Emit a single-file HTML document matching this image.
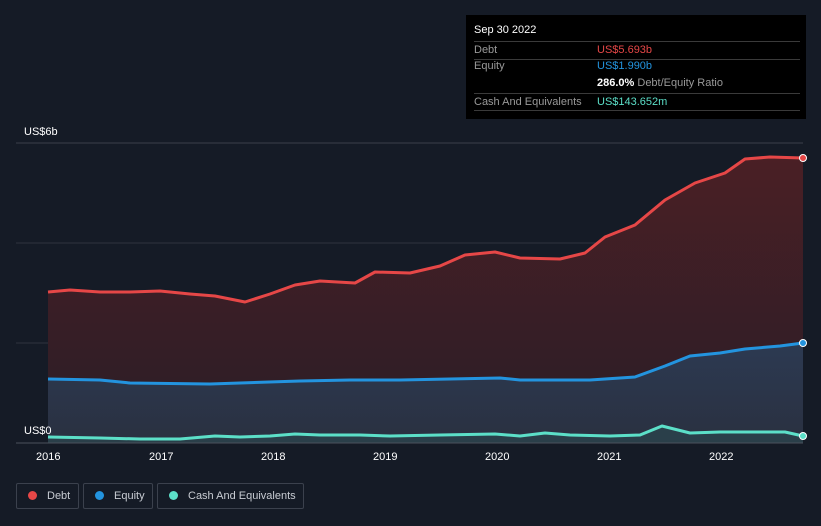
<!DOCTYPE html><html><head><style>
body{margin:0;width:821px;height:526px;background:#151b26;font-family:"Liberation Sans",sans-serif;overflow:hidden;position:relative}
.t{position:absolute;font-size:11px;white-space:nowrap}
.tip{position:absolute;left:466px;top:15px;width:340px;height:104px;background:#000}
.row{position:absolute;left:8px;width:326px;border-top:1px solid #3a3a3a;height:17px}
.leg{position:absolute;top:483px;height:26px;border:1px solid #3b414d;border-radius:2px;color:#c8ccd3;font-size:11px;line-height:25px;box-sizing:border-box;white-space:nowrap}
.leg i{display:inline-block;width:9px;height:9px;border-radius:50%;margin:0 10px 0 11px;vertical-align:-1px}
</style></head><body>
<svg width="821" height="526" style="position:absolute;left:0;top:0">
<defs><linearGradient id="d" x1="0" y1="0" x2="0" y2="1"><stop offset="0" stop-color="#4a1f25"/><stop offset="1" stop-color="#2a1e26"/></linearGradient>
<linearGradient id="e" x1="0" y1="0" x2="0" y2="1"><stop offset="0" stop-color="#2c3a52"/><stop offset="1" stop-color="#2a3040"/></linearGradient></defs>
<line x1="16" y1="143" x2="803" y2="143" stroke="#3a3f4a"/>
<line x1="16" y1="243" x2="803" y2="243" stroke="#2e333e"/>
<line x1="16" y1="343" x2="803" y2="343" stroke="#2e333e"/>
<path d="M48,292 L70,290 L100,292 L130,292 L160,291 L190,294 L215,296 L245,302 L270,294 L295,285 L320,281 L355,283 L375,272 L410,273 L440,266 L465,255 L495,252 L520,258 L560,259 L585,253 L605,237 L635,225 L665,200 L695,183 L725,173 L745,159 L770,157 L803,158 L803,443 L48,443Z" fill="url(#d)"/>
<path d="M48,379 L100,380 L130,383 L210,384 L240,383 L300,381 L350,380 L400,380 L500,378 L520,380 L590,380 L635,377 L665,366 L690,356 L720,353 L745,349 L780,346 L803,343 L803,443 L48,443Z" fill="url(#e)"/>
<path d="M48,437 L100,438 L140,439 L180,439 L215,436 L240,437 L270,436 L295,434 L320,435 L360,435 L390,436 L440,435 L495,434 L520,436 L545,433 L570,435 L610,436 L640,435 L662,426 L690,433 L720,432 L760,432 L785,432 L803,436 L803,443 L48,443Z" fill="#2c4a50" opacity=".6"/>
<path d="M48,292 L70,290 L100,292 L130,292 L160,291 L190,294 L215,296 L245,302 L270,294 L295,285 L320,281 L355,283 L375,272 L410,273 L440,266 L465,255 L495,252 L520,258 L560,259 L585,253 L605,237 L635,225 L665,200 L695,183 L725,173 L745,159 L770,157 L803,158" fill="none" stroke="#e64747" stroke-width="3" stroke-linejoin="round"/>
<path d="M48,379 L100,380 L130,383 L210,384 L240,383 L300,381 L350,380 L400,380 L500,378 L520,380 L590,380 L635,377 L665,366 L690,356 L720,353 L745,349 L780,346 L803,343" fill="none" stroke="#2394df" stroke-width="3" stroke-linejoin="round"/>
<path d="M48,437 L100,438 L140,439 L180,439 L215,436 L240,437 L270,436 L295,434 L320,435 L360,435 L390,436 L440,435 L495,434 L520,436 L545,433 L570,435 L610,436 L640,435 L662,426 L690,433 L720,432 L760,432 L785,432 L803,436" fill="none" stroke="#5cdfc8" stroke-width="3" stroke-linejoin="round"/>
<line x1="16" y1="443" x2="803" y2="443" stroke="#4a505c"/>
<circle cx="803" cy="158" r="3.5" fill="#e64747" stroke="#fff"/>
<circle cx="803" cy="343" r="3.5" fill="#2394df" stroke="#fff"/>
<circle cx="803" cy="436" r="3.5" fill="#5cdfc8" stroke="#fff"/>
</svg>
<div class="t" style="left:24px;top:126px;color:#fff">US$6b</div>
<div class="t" style="left:24px;top:425px;color:#fff">US$0</div>
<div class="t" style="left:36px;top:451px;color:#fff">2016</div>
<div class="t" style="left:149px;top:451px;color:#fff">2017</div>
<div class="t" style="left:261px;top:451px;color:#fff">2018</div>
<div class="t" style="left:373px;top:451px;color:#fff">2019</div>
<div class="t" style="left:485px;top:451px;color:#fff">2020</div>
<div class="t" style="left:597px;top:451px;color:#fff">2021</div>
<div class="t" style="left:709px;top:451px;color:#fff">2022</div>
<div class="tip">
<div class="t" style="left:8px;top:9px;color:#fff">Sep 30 2022</div>
<div class="row" style="top:26px"><span class="t" style="left:0;top:2px;color:#999">Debt</span><span class="t" style="left:123px;top:2px;color:#e64747">US$5.693b</span></div>
<div class="row" style="top:44px"><span class="t" style="left:0;top:0px;color:#999">Equity</span><span class="t" style="left:123px;top:0px;color:#2394df">US$1.990b</span></div>
<div class="t" style="left:131px;top:62px;color:#fff"><b>286.0%</b> <span style="color:#999">Debt/Equity Ratio</span></div>
<div class="row" style="top:78px"><span class="t" style="left:0;top:2px;color:#999">Cash And Equivalents</span><span class="t" style="left:123px;top:2px;color:#5cdfc8">US$143.652m</span></div>
<div class="row" style="top:95px;height:0"></div>
</div>
<div class="leg" style="left:16px;width:63px"><i style="background:#e64747"></i>Debt</div>
<div class="leg" style="left:83px;width:70px"><i style="background:#2394df"></i>Equity</div>
<div class="leg" style="left:157px;width:147px"><i style="background:#5cdfc8"></i>Cash And Equivalents</div>
</body></html>
